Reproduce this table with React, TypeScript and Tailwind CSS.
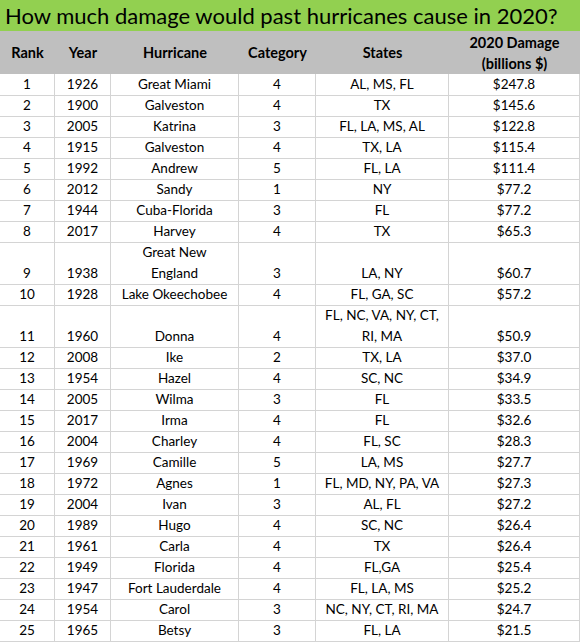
const rows: [string, string, string, string, string, string][] = [
  ["1", "1926", "Great Miami", "4", "AL, MS, FL", "$247.8"],
  ["2", "1900", "Galveston", "4", "TX", "$145.6"],
  ["3", "2005", "Katrina", "3", "FL, LA, MS, AL", "$122.8"],
  ["4", "1915", "Galveston", "4", "TX, LA", "$115.4"],
  ["5", "1992", "Andrew", "5", "FL, LA", "$111.4"],
  ["6", "2012", "Sandy", "1", "NY", "$77.2"],
  ["7", "1944", "Cuba-Florida", "3", "FL", "$77.2"],
  ["8", "2017", "Harvey", "4", "TX", "$65.3"],
  ["9", "1938", "Great New\nEngland", "3", "LA, NY", "$60.7"],
  ["10", "1928", "Lake Okeechobee", "4", "FL, GA, SC", "$57.2"],
  ["11", "1960", "Donna", "4", "FL, NC, VA, NY, CT,\nRI, MA", "$50.9"],
  ["12", "2008", "Ike", "2", "TX, LA", "$37.0"],
  ["13", "1954", "Hazel", "4", "SC, NC", "$34.9"],
  ["14", "2005", "Wilma", "3", "FL", "$33.5"],
  ["15", "2017", "Irma", "4", "FL", "$32.6"],
  ["16", "2004", "Charley", "4", "FL, SC", "$28.3"],
  ["17", "1969", "Camille", "5", "LA, MS", "$27.7"],
  ["18", "1972", "Agnes", "1", "FL, MD, NY, PA, VA", "$27.3"],
  ["19", "2004", "Ivan", "3", "AL, FL", "$27.2"],
  ["20", "1989", "Hugo", "4", "SC, NC", "$26.4"],
  ["21", "1961", "Carla", "4", "TX", "$26.4"],
  ["22", "1949", "Florida", "4", "FL,GA", "$25.4"],
  ["23", "1947", "Fort Lauderdale", "4", "FL, LA, MS", "$25.2"],
  ["24", "1954", "Carol", "3", "NC, NY, CT, RI, MA", "$24.7"],
  ["25", "1965", "Betsy", "3", "FL, LA", "$21.5"],
];

const cols = "grid grid-cols-[55px_56px_128px_77px_133px_131px]";

export default function App() {
  return (
    <div className="w-[583px] h-[642px] overflow-hidden bg-white text-black font-['Lato','Liberation_Sans',sans-serif]">
      <div className="w-[580px]">
        <div className="h-[31px] bg-[#92d050] flex items-center pl-[5px] text-[22px] leading-none whitespace-nowrap">
          How much damage would past hurricanes cause in 2020?
        </div>
        <div className={`${cols} h-[43px] bg-[#bfbfbf] font-bold text-[14.5px] leading-[21px] text-center items-center`}>
          <div>Rank</div>
          <div>Year</div>
          <div>Hurricane</div>
          <div>Category</div>
          <div>States</div>
          <div>
            2020 Damage
            <br />
            (billions $)
          </div>
        </div>
        {rows.map((r) => {
          const tall = r[2].includes("\n") || r[4].includes("\n");
          return (
            <div key={r[0]} className={`${cols} ${tall ? "h-[42px]" : "h-[21px]"} text-[13.5px] leading-[21px] text-center`}>
              {r.map((c, i) => (
                <div
                  key={i}
                  className="flex items-end justify-center border-b border-r border-[#d4d4d4] whitespace-pre-line"
                >
                  <span>{c}</span>
                </div>
              ))}
            </div>
          );
        })}
      </div>
    </div>
  );
}
